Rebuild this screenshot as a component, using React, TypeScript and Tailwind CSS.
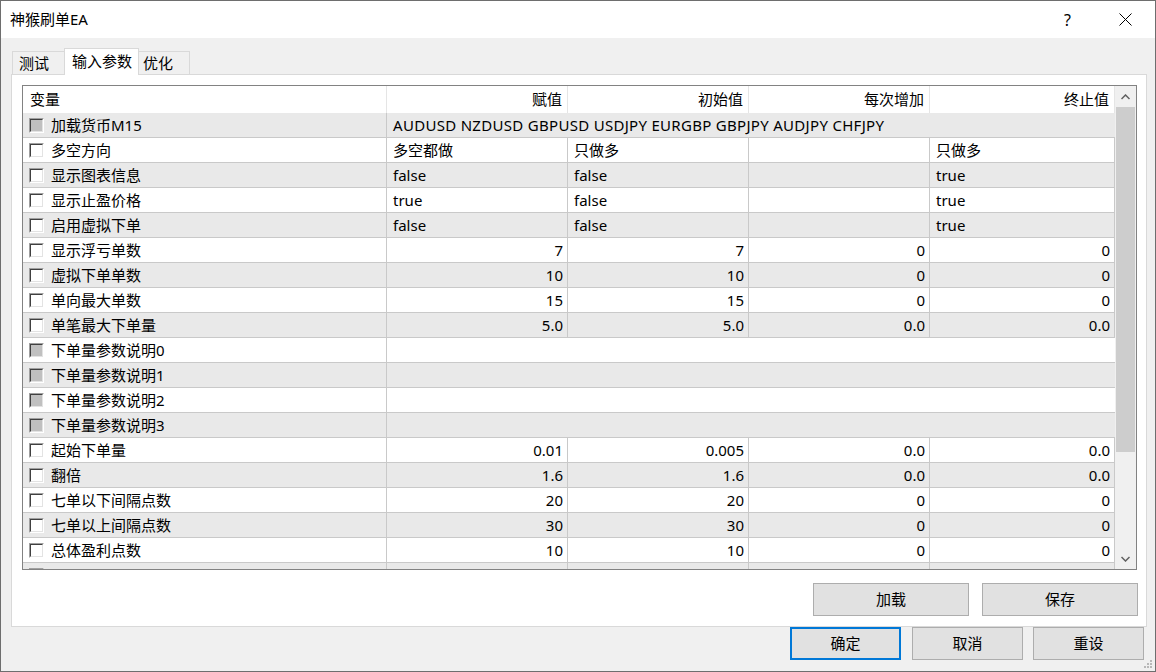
import React from "react";

type Row = {
  name: string;
  disabled?: boolean;
  span?: string;
  cells?: [string, string, string, string];
  text?: boolean; // left aligned text values
};

const rows: Row[] = [
  { name: "加载货币M15", disabled: true, span: "AUDUSD NZDUSD GBPUSD USDJPY EURGBP GBPJPY AUDJPY CHFJPY" },
  { name: "多空方向", cells: ["多空都做", "只做多", "", "只做多"], text: true },
  { name: "显示图表信息", cells: ["false", "false", "", "true"], text: true },
  { name: "显示止盈价格", cells: ["true", "false", "", "true"], text: true },
  { name: "启用虚拟下单", cells: ["false", "false", "", "true"], text: true },
  { name: "显示浮亏单数", cells: ["7", "7", "0", "0"] },
  { name: "虚拟下单单数", cells: ["10", "10", "0", "0"] },
  { name: "单向最大单数", cells: ["15", "15", "0", "0"] },
  { name: "单笔最大下单量", cells: ["5.0", "5.0", "0.0", "0.0"] },
  { name: "下单量参数说明0", disabled: true, span: "" },
  { name: "下单量参数说明1", disabled: true, span: "" },
  { name: "下单量参数说明2", disabled: true, span: "" },
  { name: "下单量参数说明3", disabled: true, span: "" },
  { name: "起始下单量", cells: ["0.01", "0.005", "0.0", "0.0"] },
  { name: "翻倍", cells: ["1.6", "1.6", "0.0", "0.0"] },
  { name: "七单以下间隔点数", cells: ["20", "20", "0", "0"] },
  { name: "七单以上间隔点数", cells: ["30", "30", "0", "0"] },
  { name: "总体盈利点数", cells: ["10", "10", "0", "0"] },
  { name: "", cells: ["", "", "", ""] },
];

const colW = ["w-[181px]", "w-[181px]", "w-[181px]", "w-[185px]"];

function Check({ disabled }: { disabled?: boolean }) {
  return (
    <div className="w-[15px] h-[15px] border border-t-[#a0a0a0] border-l-[#a0a0a0] border-b-white border-r-white shrink-0">
      <div
        className={
          "w-full h-full border border-t-[#404040] border-l-[#404040] border-b-[#e3e3e3] border-r-[#e3e3e3] " +
          (disabled ? "bg-[#c0c0c0]" : "bg-white")
        }
      />
    </div>
  );
}

function Btn({ label, w, primary }: { label: string; w: string; primary?: boolean }) {
  return (
    <div
      className={
        "h-[33px] flex items-center justify-center bg-[#e1e1e1] " +
        w +
        (primary ? " border-2 border-[#0078d7]" : " border border-[#adadad]")
      }
    >
      {label}
    </div>
  );
}

export default function App() {
  return (
    <div className="w-[1156px] h-[672px] bg-[#f0f0f0] border border-[#6e6e6e] flex flex-col text-[15px] leading-none text-black relative overflow-hidden font-['Noto_Sans','Noto_Sans_CJK_SC',sans-serif]">
      {/* Title bar */}
      <div className="h-[37px] bg-white flex items-center pl-[9px] shrink-0">
        <span>神猴刷单EA</span>
        <div className="ml-auto flex items-center">
          <span className="text-[16px] mr-[48px]">?</span>
          <svg width="13" height="13" viewBox="0 0 13 13" className="mr-[23px]">
            <path d="M0.5 0.5 L12.5 12.5 M12.5 0.5 L0.5 12.5" stroke="#000" strokeWidth="1" />
          </svg>
        </div>
      </div>

      {/* Body */}
      <div className="flex-1 pl-[10px] pr-[8px] pt-[10px] flex flex-col">
        {/* Tabs */}
        <div className="h-[26px] flex items-end pl-px relative z-10">
          <div className="h-[23px] w-[53px] border border-b-0 border-[#d9d9d9] bg-[#f0f0f0] flex items-center pl-[6px]">
            测试
          </div>
          <div className="h-[27px] -mb-px w-[75px] border border-b-0 border-[#d9d9d9] bg-white flex items-center pl-[7px] pb-[2px] -ml-px">
            输入参数
          </div>
          <div className="h-[23px] w-[51px] border border-b-0 border-l-0 border-[#d9d9d9] bg-[#f0f0f0] flex items-center pl-[4px]">
            优化
          </div>
        </div>

        {/* Panel */}
        <div className="h-[553px] bg-white border border-[#d9d9d9] pt-[10px] pl-[10px] flex flex-col">
          {/* List view */}
          <div className="w-[1115px] h-[485px] border border-[#828282] flex overflow-hidden">
            <div className="w-[1092px] flex flex-col overflow-hidden">
              {/* Header */}
              <div className="h-[27px] flex shrink-0 bg-white">
                <div className="w-[364px] border-r border-[#e5e5e5] flex items-center pl-[7px] pb-[1px]">变量</div>
                {["赋值", "初始值", "每次增加", "终止值"].map((h, i) => (
                  <div
                    key={h}
                    className={colW[i] + " border-r border-[#e5e5e5] flex items-center justify-end pr-[5px] pb-[1px]"}
                  >
                    {h}
                  </div>
                ))}
              </div>
              {/* Rows */}
              {rows.map((r, idx) => (
                <div
                  key={idx}
                  className={
                    "h-[25px] shrink-0 flex border-b border-[#c9c9c9] " + (idx % 2 === 0 ? "bg-[#e9e9e9]" : "bg-white")
                  }
                >
                  <div className="w-[364px] border-r border-[#c9c9c9] flex items-center pl-[6px] shrink-0">
                    <Check disabled={r.disabled} />
                    <span className="ml-[7px]">{r.name}</span>
                  </div>
                  {r.span !== undefined ? (
                    <div className="flex-1 flex items-center pl-[6px] whitespace-nowrap tracking-[0.3px]">{r.span}</div>
                  ) : (
                    r.cells!.map((c, i) => (
                      <div
                        key={i}
                        className={
                          colW[i] +
                          " shrink-0 border-r border-[#c9c9c9] flex items-center " +
                          (r.text ? "pl-[6px]" : "justify-end pr-[4px]")
                        }
                      >
                        {c}
                      </div>
                    ))
                  )}
                </div>
              ))}
            </div>
            {/* Scrollbar */}
            <div className="w-[21px] bg-[#f0f0f0] flex flex-col items-center">
              <div className="h-[21px] w-full flex items-center justify-center">
                <svg width="9" height="6" viewBox="0 0 9 6">
                  <path d="M0.5 5 L4.5 1 L8.5 5" stroke="#606060" strokeWidth="1.5" fill="none" />
                </svg>
              </div>
              <div className="w-[19px] h-[345px] bg-[#cdcdcd]" />
              <div className="flex-1" />
              <div className="h-[21px] w-full flex items-center justify-center">
                <svg width="9" height="6" viewBox="0 0 9 6">
                  <path d="M0.5 1 L4.5 5 L8.5 1" stroke="#606060" strokeWidth="1.5" fill="none" />
                </svg>
              </div>
            </div>
          </div>

          {/* Load / Save */}
          <div className="w-[1116px] flex justify-end gap-[13px] mt-[13px]">
            <Btn label="加载" w="w-[156px]" />
            <Btn label="保存" w="w-[156px]" />
          </div>
        </div>

        {/* Bottom buttons */}
        <div className="flex justify-end mr-[3px]">
          <Btn label="确定" w="w-[111px]" primary />
          <div className="ml-[11px]">
            <Btn label="取消" w="w-[111px]" />
          </div>
          <div className="ml-[10px]">
            <Btn label="重设" w="w-[111px]" />
          </div>
        </div>
      </div>

      {/* Resize grip */}
      <svg width="10" height="10" viewBox="0 0 10 10" className="absolute right-[2px] bottom-[2px]">
        {[
          [7, 1],
          [4, 4],
          [7, 4],
          [1, 7],
          [4, 7],
          [7, 7],
        ].map(([x, y], i) => (
          <rect key={i} x={x} y={y} width="2" height="2" fill="#b8b8b8" />
        ))}
      </svg>
    </div>
  );
}
